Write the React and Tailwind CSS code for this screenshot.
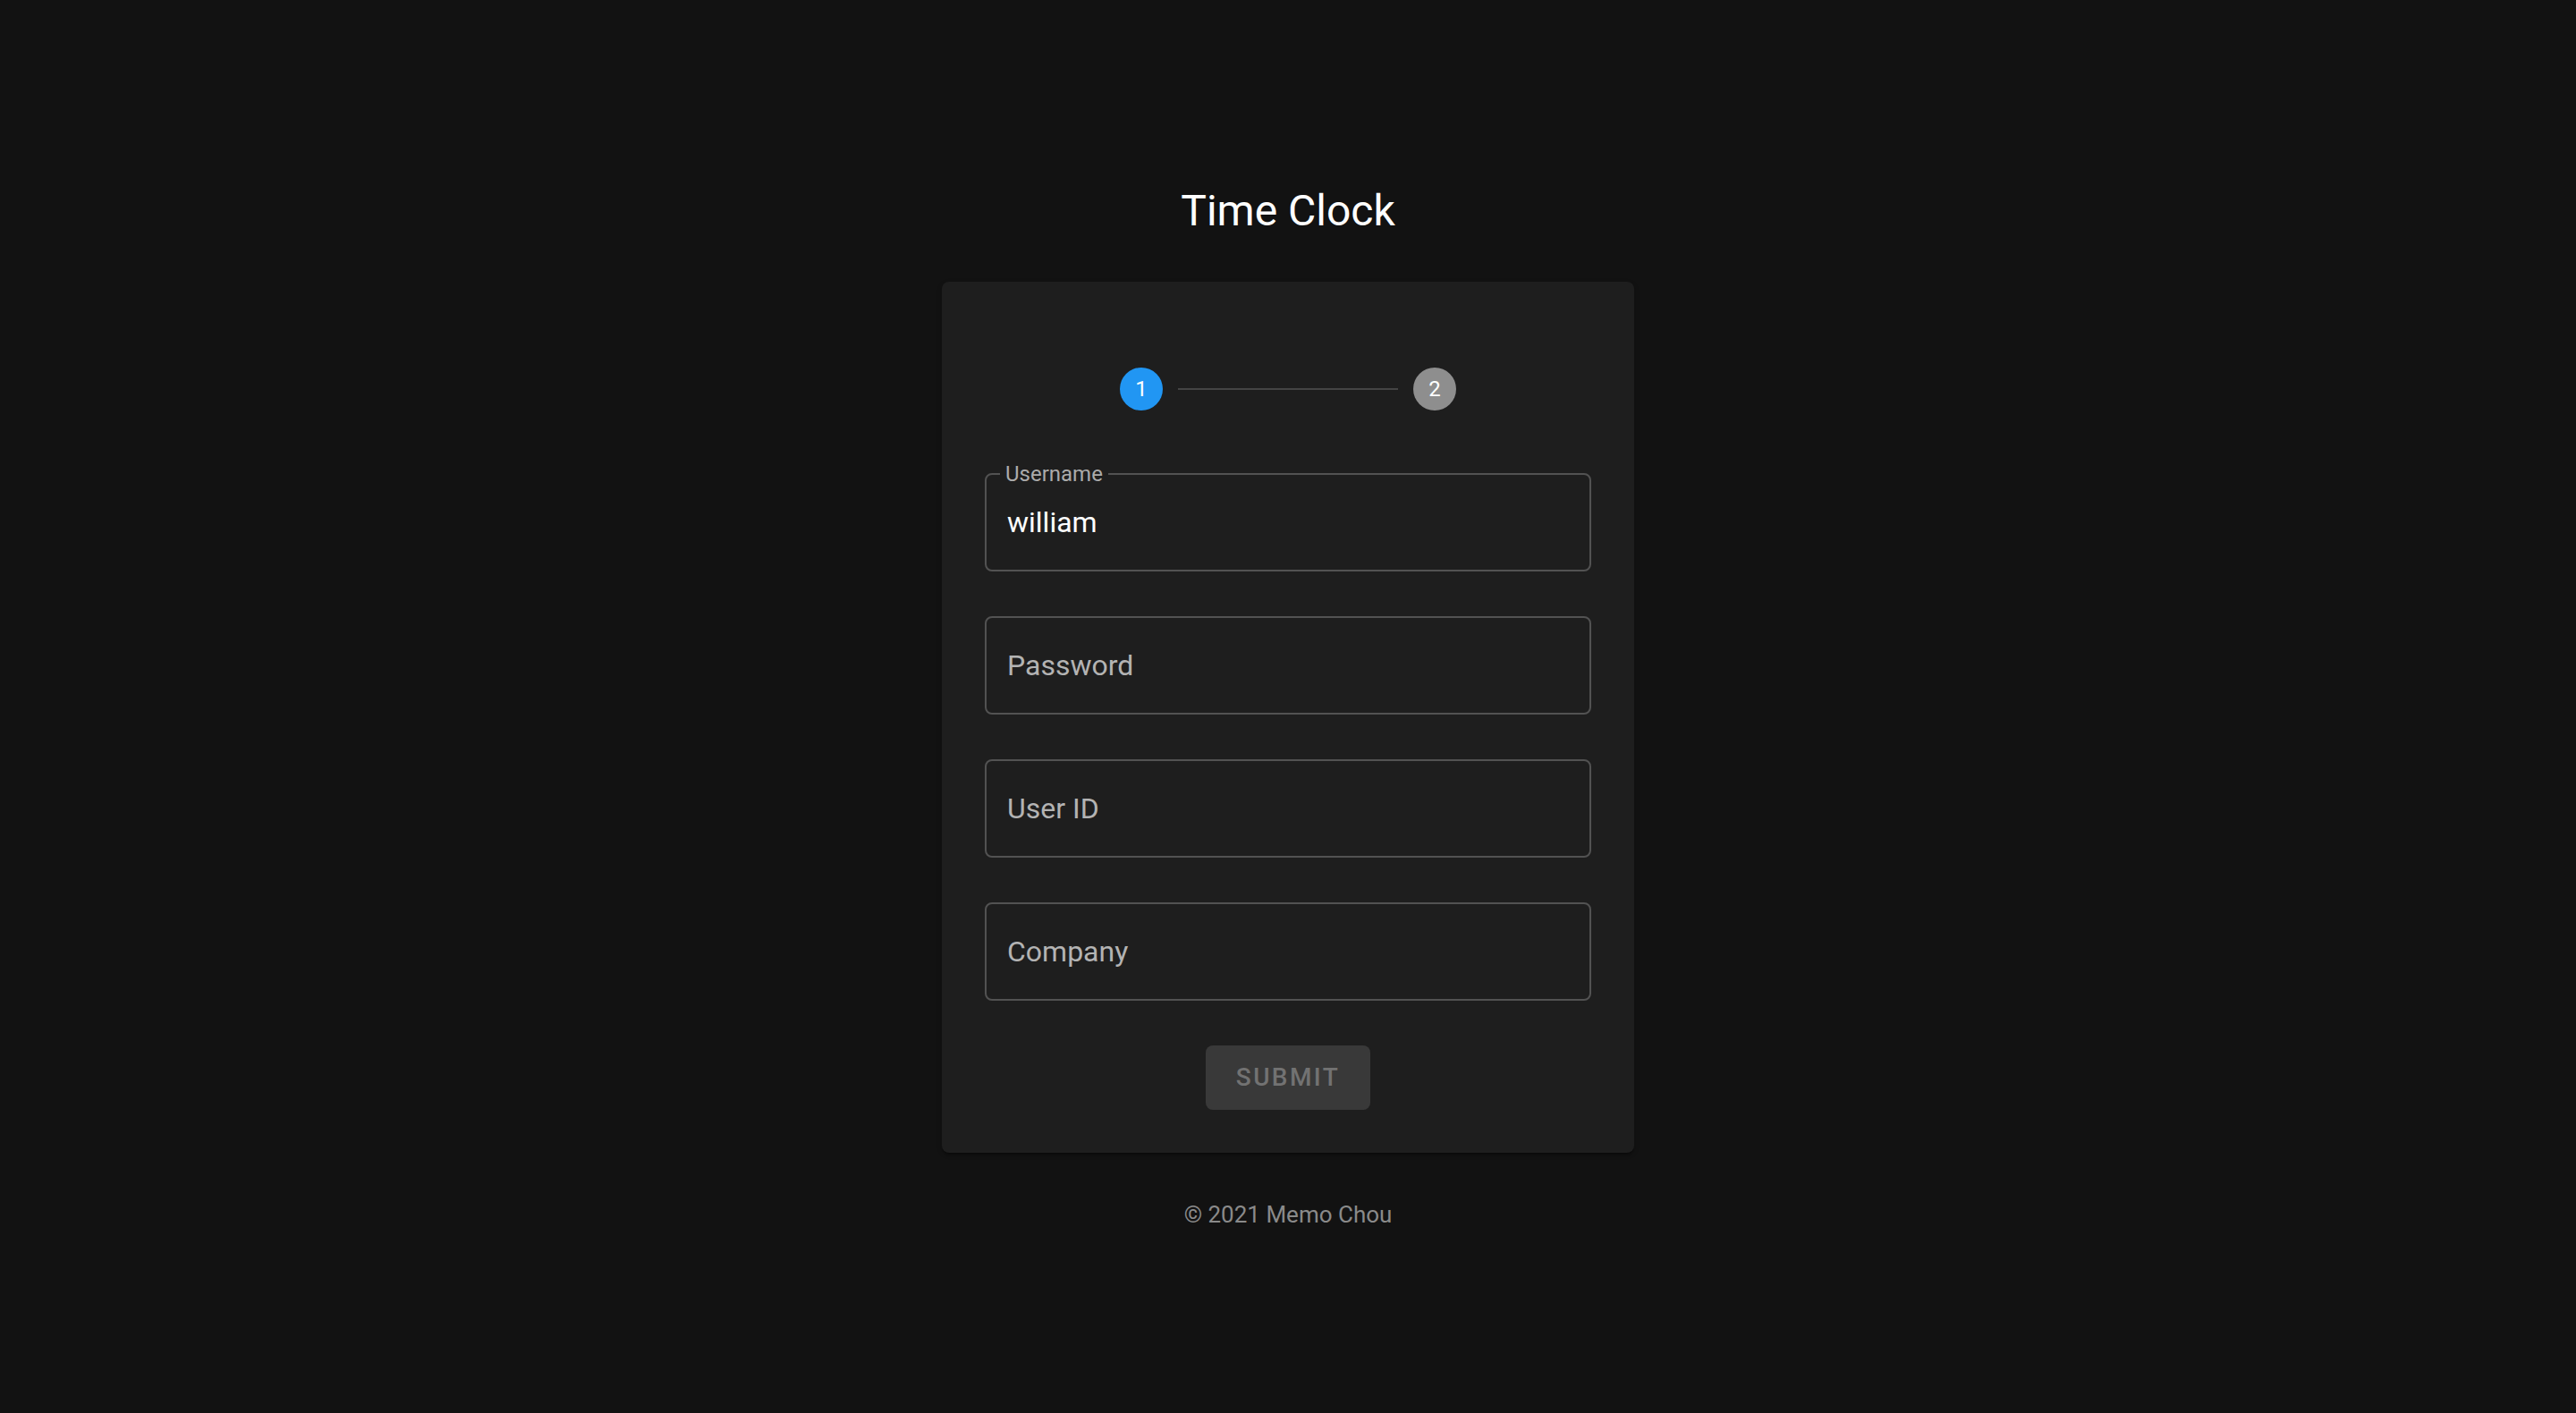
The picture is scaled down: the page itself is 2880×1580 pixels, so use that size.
import React from 'react';

const Field = ({ label, value, placeholder }) => {
  return (
    <div className="relative h-[110px] w-full rounded-[8px] border-2 border-[#525252] flex items-center pl-[23px] pr-[21px]">
      {label && (
        <span className="absolute -top-[13px] left-[15px] bg-[#1e1e1e] px-[6px] text-[24px] leading-none text-[#ababab]">
          {label}
        </span>
      )}
      <input
        readOnly
        defaultValue={value}
        placeholder={placeholder}
        className="w-full bg-transparent text-[32px] leading-[40px] text-white outline-none placeholder:text-[#b3b3b3]"
      />
    </div>
  );
};

const StepIcon = ({ n, active }) => (
  <div
    className={`w-[48px] h-[48px] rounded-full flex items-center justify-center text-[24px] leading-none text-white ${
      active ? 'bg-[#2196f3]' : 'bg-[#8e8e8e]'
    }`}
  >
    {n}
  </div>
);

export default function App() {
  return (
    <div className="min-h-screen w-full bg-[#121212] flex flex-col items-center font-['Roboto',sans-serif]">
      <h1 className="mt-[204px] text-[48px] leading-[64px] font-normal text-white">Time Clock</h1>

      <div className="mt-[47px] w-[774px] rounded-[8px] bg-[#1e1e1e] px-[48px] pt-[96px] pb-[48px] flex flex-col shadow-[0_4px_2px_-2px_rgba(0,0,0,0.2),0_2px_2px_0_rgba(0,0,0,0.14),0_2px_6px_0_rgba(0,0,0,0.12)]">
        {/* stepper */}
        <div className="h-[48px] flex items-center justify-center gap-[17px]">
          <StepIcon n="1" active />
          <div className="w-[246px] h-[2px] bg-[#444444]"></div>
          <StepIcon n="2" />
        </div>

        <div className="mt-[70px] flex flex-col gap-[50px]">
          <Field label="Username" value="william" />
          <Field placeholder="Password" />
          <Field placeholder="User ID" />
          <Field placeholder="Company" />
        </div>

        <button
          disabled
          className="mt-[50px] self-center h-[72px] px-[34px] rounded-[8px] bg-[#393939] text-[28px] leading-none font-medium tracking-[2.4px] text-[#727272] uppercase"
        >
          Submit
        </button>
      </div>

      <p className="mt-[51px] text-[26px] leading-[36px] text-[#8a8a8a]">© 2021 Memo Chou</p>
    </div>
  );
}
